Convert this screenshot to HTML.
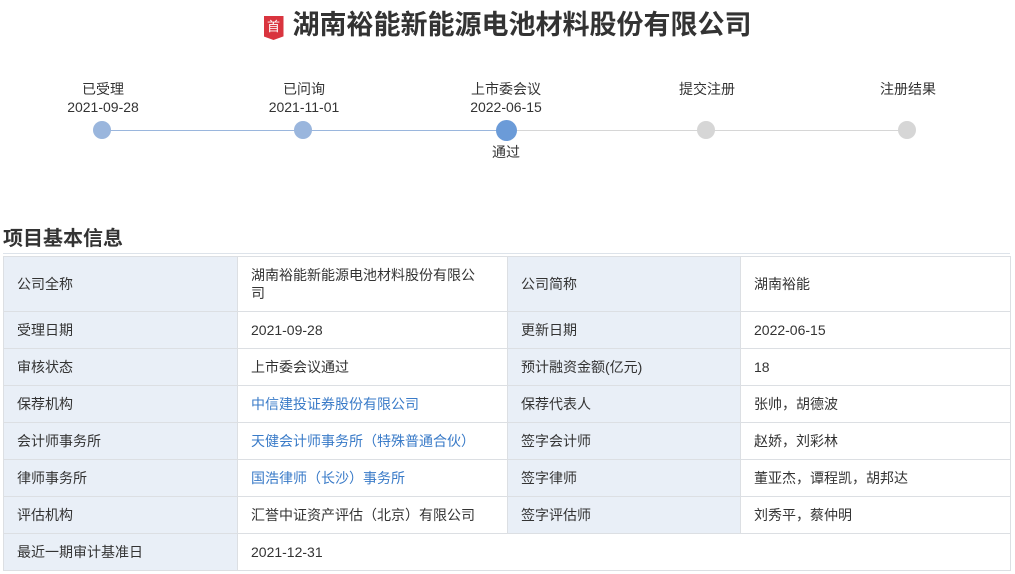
<!DOCTYPE html>
<html><head><meta charset="utf-8"><style>
body{margin:0;background:#fff;font-family:"Liberation Sans","Noto Sans CJK SC",sans-serif;color:#333;width:1015px;height:574px;overflow:hidden;position:relative}
.title{position:absolute;top:8px;left:0;width:1015px;text-align:center;font-size:27px;font-weight:bold;color:#333;line-height:34px}
.badge{display:inline-block;width:20px;height:24px;background:#d9343e;color:#fff;font-size:13px;line-height:21px;vertical-align:3px;margin-right:9px;position:relative;font-weight:normal;clip-path:polygon(0 0,100% 0,100% 85%,50% 100%,0 85%)}
.step{position:absolute;width:140px;margin-left:-70px;text-align:center;font-size:14px;line-height:18px;color:#333}
.dot{position:absolute;border-radius:50%}
.line{position:absolute;height:1px;top:130px}
h2{position:absolute;left:3px;top:222px;margin:0;font-size:20px;font-weight:bold;color:#333}
.hr{position:absolute;left:3px;top:253px;width:1007px;height:1px;background:#dde3ea}
table{position:absolute;left:3px;top:256px;width:1008px;border-collapse:collapse;font-size:14px}
td{border:1px solid #dcdfe3;padding:0 13px;height:36px;color:#333;vertical-align:middle;line-height:18px}
td.l{background:#e9eff7}
a{color:#3a7bc8;text-decoration:none}
</style></head><body>
<div class="title"><span class="badge">首</span>湖南裕能新能源电池材料股份有限公司</div>
<div class="line" style="left:102px;width:404px;background:#9ab6dd"></div>
<div class="line" style="left:506px;width:401px;background:#d6d6d6"></div>
<div class="dot" style="left:93px;top:121px;width:18px;height:18px;background:#9ab6dd"></div>
<div class="dot" style="left:294px;top:121px;width:18px;height:18px;background:#9ab6dd"></div>
<div class="dot" style="left:496px;top:120px;width:21px;height:21px;background:#6b9bd8"></div>
<div class="dot" style="left:697px;top:121px;width:18px;height:18px;background:#d6d6d6"></div>
<div class="dot" style="left:898px;top:121px;width:18px;height:18px;background:#d6d6d6"></div>
<div class="step" style="left:103px;top:80px">已受理<br>2021-09-28</div>
<div class="step" style="left:304px;top:80px">已问询<br>2021-11-01</div>
<div class="step" style="left:506px;top:80px">上市委会议<br>2022-06-15</div>
<div class="step" style="left:506px;top:143px">通过</div>
<div class="step" style="left:707px;top:80px">提交注册</div>
<div class="step" style="left:908px;top:80px">注册结果</div>
<h2>项目基本信息</h2>
<div class="hr"></div>
<table>
<colgroup><col style="width:234px"><col style="width:270px"><col style="width:233px"><col></colgroup>
<tr><td class="l" style="height:54px">公司全称</td><td>湖南裕能新能源电池材料股份有限公<br>司</td><td class="l">公司简称</td><td>湖南裕能</td></tr>
<tr><td class="l">受理日期</td><td>2021-09-28</td><td class="l">更新日期</td><td>2022-06-15</td></tr>
<tr><td class="l">审核状态</td><td>上市委会议通过</td><td class="l">预计融资金额(亿元)</td><td>18</td></tr>
<tr><td class="l">保荐机构</td><td><a>中信建投证券股份有限公司</a></td><td class="l">保荐代表人</td><td>张帅，胡德波</td></tr>
<tr><td class="l">会计师事务所</td><td><a>天健会计师事务所（特殊普通合伙）</a></td><td class="l">签字会计师</td><td>赵娇，刘彩林</td></tr>
<tr><td class="l">律师事务所</td><td><a>国浩律师（长沙）事务所</a></td><td class="l">签字律师</td><td>董亚杰，谭程凯，胡邦达</td></tr>
<tr><td class="l">评估机构</td><td>汇誉中证资产评估（北京）有限公司</td><td class="l">签字评估师</td><td>刘秀平，蔡仲明</td></tr>
<tr><td class="l">最近一期审计基准日</td><td colspan="3">2021-12-31</td></tr>
</table>
</body></html>
